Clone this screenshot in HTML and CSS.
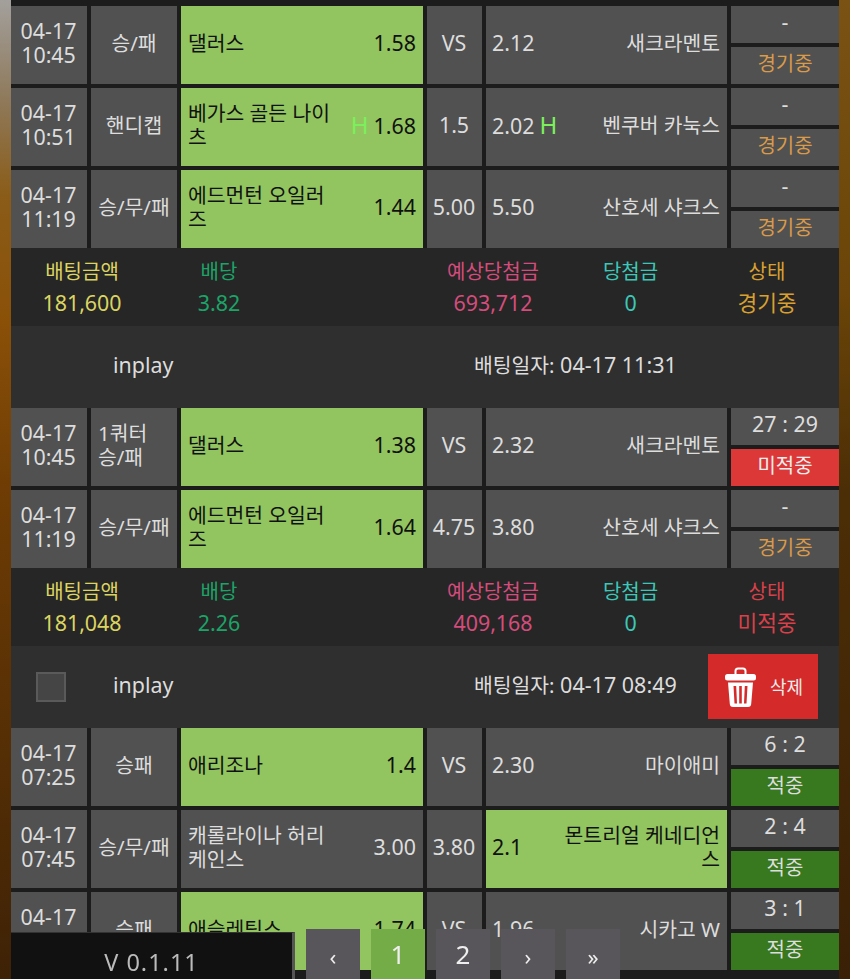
FILE: index.html
```html
<!DOCTYPE html>
<html>

<head>
    <meta charset="UTF-8">
    <title>배팅내역</title>
    <link rel="stylesheet" href="styles.css">
</head>

<body>
    <div class="wrap">
        <div class="row">
            <div class="cell time">04-17<br>10:45</div>
            <div class="cell kind">승/패</div>
            <div class="cell team on"><span class="name">댈러스</span><span class="odd">1.58</span></div>
            <div class="cell mid">VS</div>
            <div class="cell team away"><span class="odd">2.12</span><span class="name">새크라멘토</span></div>
            <div class="result">
                <div class="score">-</div>
                <div class="state playing">경기중</div>
            </div>
        </div>
        <div class="row">
            <div class="cell time">04-17<br>10:51</div>
            <div class="cell kind">핸디캡</div>
            <div class="cell team on"><span class="name">베가스 골든 나이츠</span><span class="odd"><i class="h">H</i>1.68</span></div>
            <div class="cell mid">1.5</div>
            <div class="cell team away"><span class="odd">2.02<i class="h right">H</i></span><span class="name">벤쿠버 카눅스</span></div>
            <div class="result">
                <div class="score">-</div>
                <div class="state playing">경기중</div>
            </div>
        </div>
        <div class="row">
            <div class="cell time">04-17<br>11:19</div>
            <div class="cell kind">승/무/패</div>
            <div class="cell team on"><span class="name">에드먼턴 오일러즈</span><span class="odd">1.44</span></div>
            <div class="cell mid">5.00</div>
            <div class="cell team away"><span class="odd">5.50</span><span class="name">산호세 샤크스</span></div>
            <div class="result">
                <div class="score">-</div>
                <div class="state playing">경기중</div>
            </div>
        </div>
        <div class="sum">
            <div class="sum-col c1"><b>배팅금액</b>181,600</div>
            <div class="sum-col c2"><b>배당</b>3.82</div>
            <div class="sum-col c3"><b>예상당첨금</b>693,712</div>
            <div class="sum-col c4"><b>당첨금</b>0</div>
            <div class="sum-col c5"><b>상태</b>경기중</div>
        </div>

        <div class="head">
            <div class="check-box"></div>
            <div class="league">inplay</div>
            <div class="date"><span class="label">배팅일자:</span> 04-17 11:31</div>
        </div>
        <div class="row">
            <div class="cell time">04-17<br>10:45</div>
            <div class="cell kind">1쿼터 승/패</div>
            <div class="cell team on"><span class="name">댈러스</span><span class="odd">1.38</span></div>
            <div class="cell mid">VS</div>
            <div class="cell team away"><span class="odd">2.32</span><span class="name">새크라멘토</span></div>
            <div class="result">
                <div class="score">27 : 29</div>
                <div class="state miss">미적중</div>
            </div>
        </div>
        <div class="row">
            <div class="cell time">04-17<br>11:19</div>
            <div class="cell kind">승/무/패</div>
            <div class="cell team on"><span class="name">에드먼턴 오일러즈</span><span class="odd">1.64</span></div>
            <div class="cell mid">4.75</div>
            <div class="cell team away"><span class="odd">3.80</span><span class="name">산호세 샤크스</span></div>
            <div class="result">
                <div class="score">-</div>
                <div class="state playing">경기중</div>
            </div>
        </div>
        <div class="sum">
            <div class="sum-col c1"><b>배팅금액</b>181,048</div>
            <div class="sum-col c2"><b>배당</b>2.26</div>
            <div class="sum-col c3"><b>예상당첨금</b>409,168</div>
            <div class="sum-col c4"><b>당첨금</b>0</div>
            <div class="sum-col c5 red"><b>상태</b>미적중</div>
        </div>

        <div class="head">
            <div class="check-box show"></div>
            <div class="league">inplay</div>
            <div class="date"><span class="label">배팅일자:</span> 04-17 08:49</div>
            <a href="#" class="del">
                <svg width="31" height="40" viewBox="0 0 31 40">
                    <path d="M10.500 8V4Q10.500 1.500 13 1.500H18Q20.500 1.500 20.500 4V8" fill="none" stroke="#fff" stroke-width="2" />
                    <rect x="0" y="7" width="31" height="6.500" rx="2.500" fill="#fff" />
                    <path d="M3 15.500H28L26.200 37Q26 40 23 40H8Q5 40 4.800 37ZM8.500 19L9.500 36.500H12L11.200 19ZM14.200 19V36.500H16.800V19ZM19.800 19L19 36.500H21.500L22.500 19Z" fill="#fff" fill-rule="evenodd" />
                </svg>
                <span>삭제</span>
            </a>
        </div>
        <div class="row">
            <div class="cell time">04-17<br>07:25</div>
            <div class="cell kind">승패</div>
            <div class="cell team on"><span class="name">애리조나</span><span class="odd">1.4</span></div>
            <div class="cell mid">VS</div>
            <div class="cell team away"><span class="odd">2.30</span><span class="name">마이애미</span></div>
            <div class="result">
                <div class="score">6 : 2</div>
                <div class="state hit">적중</div>
            </div>
        </div>
        <div class="row">
            <div class="cell time">04-17<br>07:45</div>
            <div class="cell kind">승/무/패</div>
            <div class="cell team"><span class="name">캐롤라이나 허리케인스</span><span class="odd">3.00</span></div>
            <div class="cell mid">3.80</div>
            <div class="cell team away on"><span class="odd">2.1</span><span class="name">몬트리얼 케네디언스</span></div>
            <div class="result">
                <div class="score">2 : 4</div>
                <div class="state hit">적중</div>
            </div>
        </div>
        <div class="row">
            <div class="cell time">04-17<br>08:05</div>
            <div class="cell kind">승패</div>
            <div class="cell team on"><span class="name">애슬레틱스</span><span class="odd">1.74</span></div>
            <div class="cell mid">VS</div>
            <div class="cell team away"><span class="odd">1.96</span><span class="name">시카고 W</span></div>
            <div class="result">
                <div class="score">3 : 1</div>
                <div class="state hit">적중</div>
            </div>
        </div>
    </div>

    <div class="footer">
        <div class="version">V 0.1.11</div>
        <div class="pages">
            <a href="#" class="small">‹</a>
            <a href="#" class="cur">1</a>
            <a href="#">2</a>
            <a href="#" class="small">›</a>
            <a href="#" class="small">»</a>
        </div>
    </div>
</body>

</html>
```

FILE: styles.css
```css
* {
    box-sizing: border-box;
}

html,
body {
    margin: 0;
    padding: 0;
    height: 979px;
    overflow: hidden;
}

body {
    font: 20.4px/24px "Noto Sans", "Noto Sans CJK KR", sans-serif;
    color: #ddd;
    background:
        linear-gradient(180deg, #a3a09c 0, #8f7a5c 10%, #8a5c18 20%, #8a5008 33%, #6e3c04 50%, #3e2206 100%) left top / 50% 100% no-repeat,
        linear-gradient(180deg, #7a5214 0, #6a4408 30%, #4c2e06 50%, #3a2006 100%) right top / 50% 100% no-repeat;
}

a {
    text-decoration: none;
}

.wrap {
    width: 828px;
    height: 979px;
    margin-left: 11px;
    padding-top: 6px;
    background: #1c1c1c;
}

.row {
    display: flex;
    gap: 4px;
    height: 78px;
    margin-bottom: 4px;
}

.cell {
    display: flex;
    align-items: center;
    padding-bottom: 4px;
    background: #515151;
}

.time {
    width: 76px;
    padding-right: 1px;
    padding-bottom: 5px;
    font-size: 21.4px;
    justify-content: center;
    text-align: center;
}

.kind {
    width: 86px;
    padding-left: 7px;
    padding-right: 7px;
    justify-content: center;
}

.team {
    width: 242px;
    padding-left: 7px;
    padding-right: 7px;
    justify-content: space-between;
}

.team .name {
    width: 145px;
}

.team .odd {
    font-size: 21.4px;
    white-space: nowrap;
}

.team.away {
    width: 241px;
    padding-left: 6px;
}

.away .name {
    width: 160px;
    text-align: right;
}

.on {
    background: #92c55f;
    color: #111;
}

.h {
    font-style: normal;
    color: #7cf05c;
    margin-right: 5px;
    font-size: 24px;
}

.h.right {
    margin: 0 0 0 5px;
}

.mid {
    width: 55px;
    padding-right: 1px;
    font-size: 21.4px;
    justify-content: center;
}

.result {
    display: flex;
    flex-direction: column;
    gap: 4px;
    width: 108px;
}

.score,
.state {
    flex: 1;
    text-align: center;
    background: #515151;
    font-size: 20px;
    line-height: 34px;
}

.score {
    font-size: 21.4px;
    line-height: 32px;
}

.playing {
    color: #d99a4a;
}

.miss {
    background: #dc3838;
    color: #eee;
}

.hit {
    background: #38781f;
}

.sum {
    display: flex;
    height: 78px;
    margin-top: -4px;
    padding-top: 12px;
    background: #262626;
    font-size: 21.4px;
    text-align: center;
}

.sum-col b {
    display: block;
    font-weight: normal;
    font-size: 20px;
    margin-bottom: 7px;
}

.c1 {
    width: 142px;
    color: #dcd460;
}

.c2 {
    width: 132px;
    color: #1ca468;
}

.c3 {
    width: 140px;
    margin-left: 138px;
    color: #d54c7c;
}

.c4 {
    width: 135px;
    color: #3cc8b8;
}

.c5 {
    width: 138px;
    color: #d9a030;
}

.c5.red {
    color: #d8404a;
}

.head {
    position: relative;
    display: flex;
    align-items: center;
    height: 82px;
    background: #2f2f2f;
    padding-bottom: 4px;
}

.check-box {
    width: 30px;
    height: 30px;
    margin-top: 4px;
    margin-left: 25px;
    visibility: hidden;
    background: #454545;
    border: 2px solid #5a5a5a;
}

.check-box.show {
    visibility: visible;
}

.league {
    margin-left: 47px;
    width: 361px;
    font-size: 21.4px;
}

.date {
    font-size: 21.5px;
    white-space: nowrap;
}

.date .label {
    font-size: 20.4px;
}

.del {
    position: absolute;
    left: 697px;
    top: 8px;
    display: flex;
    align-items: center;
    gap: 14px;
    width: 110px;
    height: 65px;
    padding-left: 17px;
    background: #d52a2a;
    color: #eee;
    font-size: 18px;
}

.footer {
    position: fixed;
    left: 11px;
    bottom: 0;
    display: flex;
    align-items: flex-end;
}

.version {
    width: 284px;
    height: 47px;
    background: #111;
    border-right: 3px solid #555;
    border-top: 1px solid #333;
    text-align: center;
    font-size: 23.5px;
    line-height: 58px;
    letter-spacing: 1px;
    color: #bbb;
}

.pages {
    display: flex;
    gap: 11px;
    margin-left: 11px;
}

.pages a {
    width: 54px;
    height: 50px;
    background: #58565a;
    color: #eee;
    font-size: 26px;
    line-height: 50px;
    text-align: center;
}

.pages a.small {
    font-size: 22px;
    line-height: 55px;
}

.pages a.cur {
    background: #74ac48;
}
```
